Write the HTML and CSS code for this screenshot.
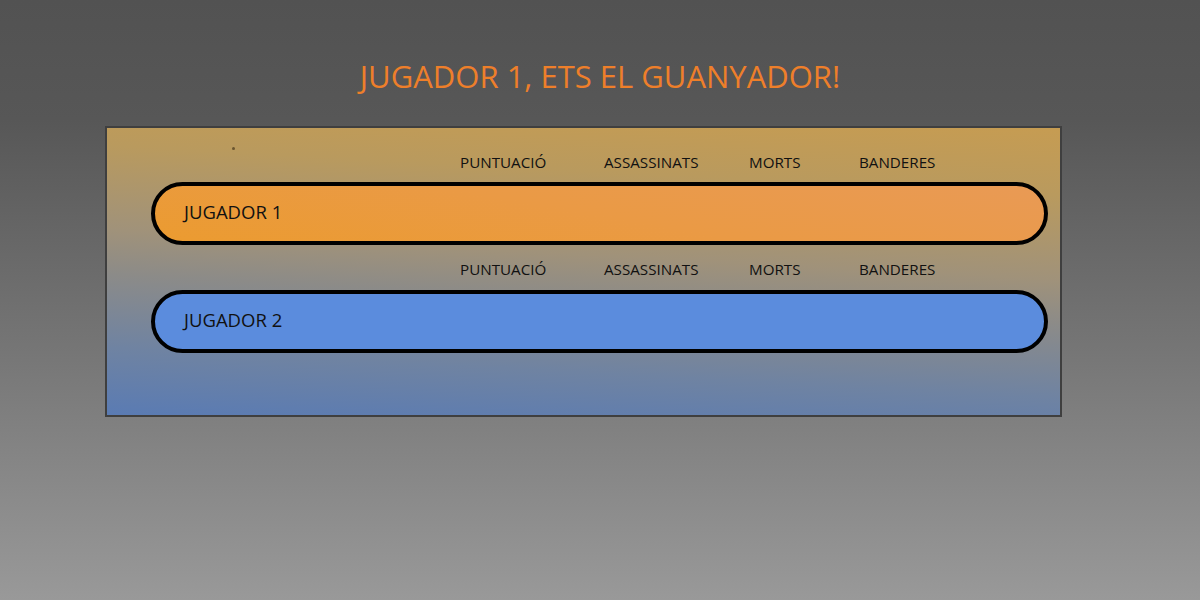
FILE: index.html
```html
<!DOCTYPE html>
<html>
<head>
<meta charset="utf-8">
<link rel="stylesheet" href="styles.css">
</head>
<body>
<div class="page">
  <h1 class="title">JUGADOR 1, ETS EL GUANYADOR!</h1>
  <div class="panel">
    <span class="dot"></span>
    <div class="heads">
      <span class="h h1">PUNTUACIÓ</span>
      <span class="h h2">ASSASSINATS</span>
      <span class="h h3">MORTS</span>
      <span class="h h4">BANDERES</span>
    </div>
    <div class="pill orange"><span class="name">JUGADOR 1</span></div>
    <div class="heads second">
      <span class="h h1">PUNTUACIÓ</span>
      <span class="h h2">ASSASSINATS</span>
      <span class="h h3">MORTS</span>
      <span class="h h4">BANDERES</span>
    </div>
    <div class="pill blue"><span class="name">JUGADOR 2</span></div>
  </div>
</div>
</body>
</html>
```

FILE: styles.css
```css
html, body {
  margin: 0;
  height: 100%;
}
body {
  background: linear-gradient(to bottom, #525252 0%, #575757 20%, #777777 60%, #999999 100%);
  font-family: "Open Sans", "Noto Sans", sans-serif;
  overflow: hidden;
}
.page {
  padding-top: 54px;
}
.title {
  margin: 0;
  text-align: center;
  font-weight: 400;
  font-size: 31px;
  line-height: 44px;
  color: #ee7f2a;
}
.panel {
  position: relative;
  box-sizing: border-box;
  width: 957px;
  height: 291px;
  margin: 28px 0 0 105px;
  border: 2px solid #3f3f3f;
  background: linear-gradient(183deg, #c69c52 0%, #b99a5e 20%, #a0927a 45%, #8c8b88 58%, #6f83a2 80%, #5a7bb3 100%);
  padding-top: 22px;
}
.dot {
  position: absolute;
  left: 125px;
  top: 19px;
  width: 3px;
  height: 3px;
  border-radius: 50%;
  background: #6a5530;
}
.heads {
  display: flex;
  padding-left: 353px;
  height: 24px;
  align-items: center;
  font-size: 15.2px;
  color: #111;
}
.heads.second {
  margin-top: 12px;
}
.h1 { width: 144px; }
.h2 { width: 145px; }
.h3 { width: 110px; }
.h4 { width: 90px; }
.pill {
  box-sizing: border-box;
  margin: 8px 0 0 44px;
  width: 897px;
  height: 63px;
  border: 4px solid #000;
  border-radius: 32px;
  display: flex;
  align-items: center;
  padding-left: 29px;
  font-size: 18.5px;
  color: #111;
}
.orange {
  background: linear-gradient(190deg, #e99a55 0%, #ea9a45 50%, #eb9b30 100%);
}
.blue {
  background: #5b8cdd;
  margin-top: 9px;
}
.name {
  position: relative;
  top: -2px;
}
```
